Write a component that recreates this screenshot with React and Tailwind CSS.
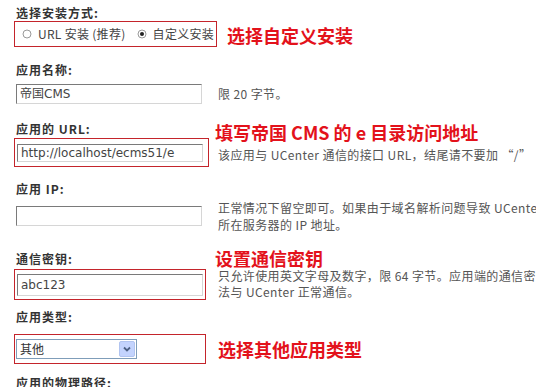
const Label = ({ children, className = "" }) => (
  <div className={`pl-[2px] h-[14px] leading-[14px] text-[12px] font-bold tracking-[1px] text-[#333] ${className}`}>
    {children}
  </div>
);

const Note = ({ children, className = "" }) => (
  <div className={`text-[18px] font-bold text-[#e3121b] whitespace-nowrap ${className}`}>
    {children}
  </div>
);

const Help = ({ children, className = "" }) => (
  <div className={`text-[12px] tracking-[0.4px] text-[#555] whitespace-nowrap ${className}`}>{children}</div>
);

const Field = ({ value, className = "" }) => (
  <div
    className={`w-[186px] border border-t-[#7a7a7a] border-l-[#7a7a7a] border-r-[#d6d6d6] border-b-[#d6d6d6] bg-white flex items-center pl-[3px] font-['DejaVu_Sans','Noto_Sans_CJK_SC',sans-serif] text-[12px] text-[#444] ${className}`}
  >
    {value}
  </div>
);

const Radio = ({ checked }) => (
  <svg width="10" height="10" viewBox="0 0 10 10" className="shrink-0">
    <circle cx="5" cy="5" r="4" fill="white" stroke="#9a9a9a" strokeWidth="1" />
    {checked && <circle cx="5" cy="5" r="2" fill="#222" />}
  </svg>
);

export default function App() {
  return (
    <div className="w-[536px] h-[387px] overflow-hidden bg-white font-['Noto_Sans_CJK_SC',sans-serif]">
      <div className="pl-[14px]">
        {/* 安装方式 */}
        <Label className="mt-[6px]">选择安装方式:</Label>
        <div className="flex mt-[1px]">
          <div className="w-[203px] h-[26px] border border-[#c4242b] flex items-center pl-[7px] gap-[6px] text-[12px] tracking-[0.3px] text-[#444] whitespace-nowrap">
            <Radio />
            <span className="mr-[5px]">URL 安装 (推荐)</span>
            <Radio checked />
            <span>自定义安装</span>
          </div>
          <Note className="ml-[10px] leading-[26px] mt-[1px]">选择自定义安装</Note>
        </div>

        {/* 应用名称 */}
        <Label className="mt-[15px]">应用名称:</Label>
        <div className="flex mt-[7px] items-center">
          <Field value="帝国CMS" className="h-[20px] ml-[2px]" />
          <Help className="ml-[16px] leading-[20px]">限 20 字节。</Help>
        </div>

        {/* URL */}
        <div className="flex h-[16px] mt-[18px]">
          <Label className="w-[201px] shrink-0">应用的 URL:</Label>
          <Note className="leading-[20px]">填写帝国 CMS 的 e 目录访问地址</Note>
        </div>
        <div className="flex">
          <div className="w-[195px] h-[29px] border border-[#c4242b] pl-[2px] pt-[5px] shrink-0">
            <Field value="http://localhost/ecms51/e" className="h-[18px] w-[185px]" />
          </div>
          <Help className="ml-[9px] pt-[9px] leading-[16px]">该应用与 UCenter 通信的接口 URL，结尾请不要加 “/”</Help>
        </div>

        {/* IP */}
        <Label className="mt-[15px]">应用 IP:</Label>
        <div className="flex mt-[3px]">
          <Field value="" className="h-[20px] ml-[2px] mt-[7px] shrink-0" />
          <Help className="ml-[16px] leading-[17px]">
            <div>正常情况下留空即可。如果由于域名解析问题导致 UCenter 与该应用通信失败，请尝试设置为该应用</div>
            <div>所在服务器的 IP 地址。</div>
          </Help>
        </div>

        {/* 通信密钥 */}
        <div className="flex h-[17px] mt-[19px]">
          <Label className="w-[201px] shrink-0">通信密钥:</Label>
          <Note className="leading-[16px] -mt-[2px]">设置通信密钥</Note>
        </div>
        <div className="flex">
          <div className="w-[192px] h-[31px] border border-[#c4242b] pl-[2px] pt-[4px] shrink-0">
            <Field value="abc123" className="h-[22px] w-[185px]" />
          </div>
          <Help className="ml-[12px] -mt-[1px] leading-[16px]">
            <div>只允许使用英文字母及数字，限 64 字节。应用端的通信密钥必须与此设置保持一致，否则该应用将无</div>
            <div>法与 UCenter 正常通信。</div>
          </Help>
        </div>

        {/* 应用类型 */}
        <Label className="mt-[10px]">应用类型:</Label>
        <div className="flex mt-[10px]">
          <div className="w-[192px] h-[30px] border border-[#c4242b] pl-[1px] pt-[4px] shrink-0">
            <div className="w-[121px] h-[20px] border border-[#7f9db9] bg-white flex items-center justify-between text-[12px] text-[#333]">
              <span className="pl-[3px]">其他</span>
              <div className="w-[16px] h-[16px] mr-[1px] rounded-[2px] bg-[#c3d3fd] border border-[#b1c4f0] flex items-center justify-center">
                <svg width="8" height="6" viewBox="0 0 8 6">
                  <path d="M1 1.5 L4 4.5 L7 1.5" fill="none" stroke="#4d6185" strokeWidth="1.8" />
                </svg>
              </div>
            </div>
          </div>
          <Note className="ml-[12px] leading-[30px]">选择其他应用类型</Note>
        </div>

        {/* 物理路径 */}
        <Label className="mt-[12px]">应用的物理路径:</Label>
      </div>
    </div>
  );
}
